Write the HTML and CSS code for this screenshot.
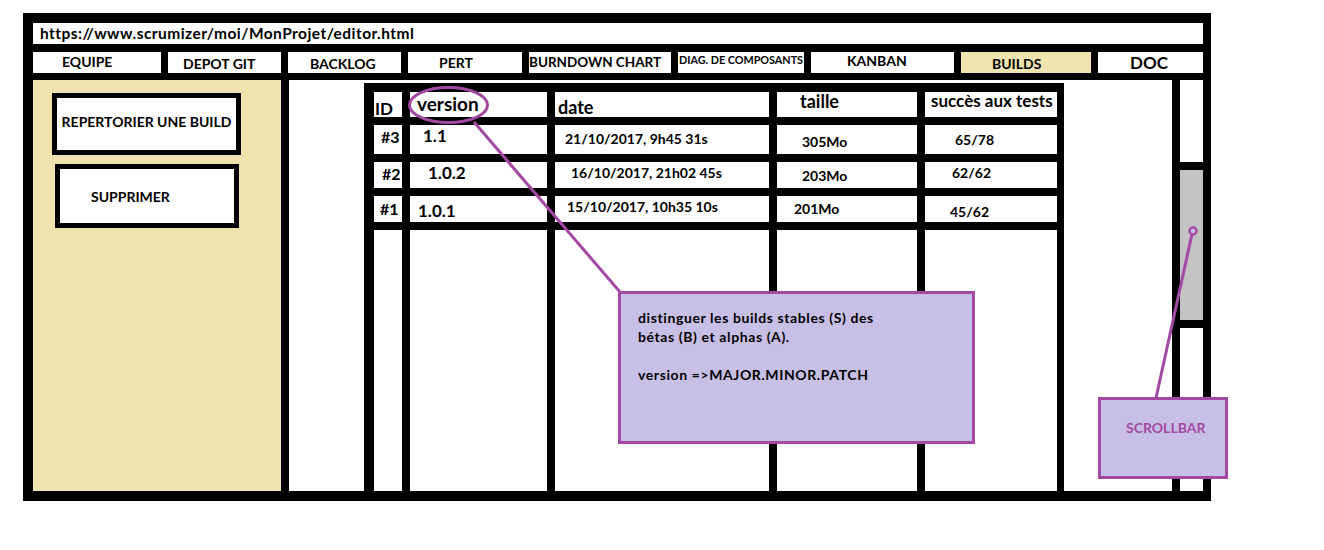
FILE: index.html
```html
<!DOCTYPE html>
<html lang="fr">
<head>
<meta charset="utf-8">
<title>Scrumizer - Builds</title>
<link rel="stylesheet" href="styles.css">
</head>
<body>
<div class="frame">
  <div class="url">https://www.scrumizer/moi/MonProjet/editor.html</div>
  <nav class="tabs">
    <div class="tab t-equipe">EQUIPE</div>
    <div class="tab t-depot">DEPOT GIT</div>
    <div class="tab t-backlog">BACKLOG</div>
    <div class="tab t-pert">PERT</div>
    <div class="tab t-burn">BURNDOWN CHART</div>
    <div class="tab t-diag">DIAG. DE COMPOSANTS</div>
    <div class="tab t-kanban">KANBAN</div>
    <div class="tab t-builds">BUILDS</div>
    <div class="tab t-doc">DOC</div>
  </nav>
  <div class="main">
    <aside class="sidebar">
      <div class="btn btn-rep">REPERTORIER UNE BUILD</div>
      <div class="btn btn-sup">SUPPRIMER</div>
    </aside>
    <section class="content">
      <div class="grid">
        <div class="row hdr">
          <div class="cell id">ID</div>
          <div class="cell ver">version</div>
          <div class="cell date">date</div>
          <div class="cell size">taille</div>
          <div class="cell tests">succès aux tests</div>
        </div>
        <div class="row r1">
          <div class="cell id">#3</div>
          <div class="cell ver">1.1</div>
          <div class="cell date">21/10/2017, 9h45 31s</div>
          <div class="cell size">305Mo</div>
          <div class="cell tests">65/78</div>
        </div>
        <div class="row r2">
          <div class="cell id">#2</div>
          <div class="cell ver">1.0.2</div>
          <div class="cell date">16/10/2017, 21h02 45s</div>
          <div class="cell size">203Mo</div>
          <div class="cell tests">62/62</div>
        </div>
        <div class="row r3">
          <div class="cell id">#1</div>
          <div class="cell ver">1.0.1</div>
          <div class="cell date">15/10/2017, 10h35 10s</div>
          <div class="cell size">201Mo</div>
          <div class="cell tests">45/62</div>
        </div>
        <div class="row empty">
          <div class="cell"></div>
          <div class="cell"></div>
          <div class="cell"></div>
          <div class="cell"></div>
          <div class="cell"></div>
        </div>
      </div>
    </section>
    <div class="scroll"><div class="thumb"></div></div>
  </div>
</div>

<svg class="marks" width="1324" height="550" viewBox="0 0 1324 550" aria-hidden="true">
  <ellipse cx="448.5" cy="105" rx="39" ry="17.5" fill="none" stroke="#A349A4" stroke-width="3"/>
  <line x1="474" y1="122" x2="620" y2="292" stroke="#A349A4" stroke-width="3"/>
  <line x1="1156" y1="398" x2="1192" y2="234" stroke="#A349A4" stroke-width="3"/>
  <circle cx="1193" cy="231" r="3.5" fill="#C8BFE7" stroke="#A349A4" stroke-width="2.5"/>
</svg>

<div class="note note-version">
  <p>distinguer les builds stables (S) des<br>bétas (B) et alphas (A).</p>
  <p>version =&gt;MAJOR.MINOR.PATCH</p>
</div>
<div class="note note-scroll">SCROLLBAR</div>
</body>
</html>
```

FILE: styles.css
```css
html, body {
  margin: 0;
  padding: 0;
}

body {
  width: 1324px;
  height: 550px;
  overflow: hidden;
  background: #fff;
  position: relative;
  padding: 13px 0 0 23px;
  box-sizing: border-box;
  font-family: Lato, "Liberation Sans", sans-serif;
  font-weight: 700;
  color: #000;
}

.frame {
  width: 1188px;
  height: 488px;
  box-sizing: border-box;
  background: #000;
  padding: 10px 8px 10px 10px;
  display: flex;
  flex-direction: column;
}

.url {
  height: 21px;
  background: #fff;
  margin-bottom: 8px;
  font-size: 15.5px;
  letter-spacing: 0.45px;
  line-height: 1;
  padding: 3px 0 0 7px;
  box-sizing: border-box;
  white-space: nowrap;
}

/* ---------- tabs ---------- */
.tabs {
  display: flex;
  gap: 7px;
  height: 21px;
  margin-bottom: 7px;
}

.tab {
  background: #fff;
  height: 21px;
  box-sizing: border-box;
  font-size: 14px;
  line-height: 1;
  white-space: nowrap;
  overflow: hidden;
  flex: none;
}

.t-equipe  { width: 128px; padding: 3px 0 0 29px; }
.t-depot   { width: 113px; padding: 5px 0 0 15px; }
.t-backlog { width: 113px; padding: 5px 0 0 22px; }
.t-pert    { width: 114px; padding: 4px 0 0 31px; }
.t-burn    { width: 142px; padding: 4px 0 0 0; font-size: 13.5px; }
.t-diag    { width: 126px; padding: 3px 0 0 1px; font-size: 10.8px; }
.t-kanban  { width: 143px; padding: 2px 0 0 36px; }
.t-builds  { width: 130px; padding: 5px 0 0 31px; background: #EFE4B0; }
.t-doc     { flex: 1; padding: 2px 0 0 32px; font-size: 17px; }

/* ---------- main ---------- */
.main {
  flex: 1;
  display: flex;
  gap: 8px;
  min-height: 0;
}

.sidebar {
  width: 248px;
  flex: none;
  background: #EFE4B0;
  display: flex;
  flex-direction: column;
  align-items: flex-start;
}

.btn {
  background: #fff;
  border: 5px solid #000;
  box-sizing: border-box;
  display: flex;
  align-items: center;
  font-size: 14px;
  line-height: 1;
  white-space: nowrap;
}

.btn-rep {
  margin: 13px 0 0 19px;
  width: 189px;
  height: 62px;
  justify-content: center;
  padding-bottom: 4px;
}

.btn-sup {
  margin: 9px 0 0 22px;
  width: 184px;
  height: 64px;
  padding-left: 31px;
  padding-top: 2px;
}

.content {
  width: 883px;
  flex: none;
  background: #fff;
  padding: 3px 0 0 75px;
  box-sizing: border-box;
}

.grid {
  width: 700px;
  height: 100%;
  box-sizing: border-box;
  background: #000;
  padding: 9px 7px 0 10px;
  display: grid;
  grid-template-columns: 28px 137px 214px 140px 132px;
  grid-template-rows: 25px 29px 26px 26px 1fr;
  gap: 8px;
}

.row { display: contents; }

.cell {
  background: #fff;
  line-height: 1;
  white-space: nowrap;
  font-size: 14px;
  box-sizing: border-box;
}

/* header */
.hdr .id    { font-size: 17px; padding: 8px 0 0 1px; }
.hdr .ver   { font-size: 19px; padding: 2px 0 0 7px; }
.hdr .date  { font-size: 18px; padding: 6px 0 0 3px; }
.hdr .size  { font-size: 18px; padding: 0 0 0 23px; }
.hdr .tests { font-size: 17px; padding: 0 0 0 6px; }

/* data rows */
.r1 .id, .r2 .id, .r3 .id { font-size: 16px; }
.r1 .ver, .r2 .ver, .r3 .ver { font-size: 17px; }

.r1 .id    { padding: 4px 0 0 7px; }
.r1 .ver   { padding: 2px 0 0 13px; }
.r1 .date  { padding: 7px 0 0 10px; }
.r1 .size  { padding: 10px 0 0 25px; }
.r1 .tests { padding: 8px 0 0 30px; }

.r2 .id    { padding: 4px 0 0 8px; }
.r2 .ver   { padding: 2px 0 0 18px; }
.r2 .date  { padding: 4px 0 0 16px; }
.r2 .size  { padding: 7px 0 0 25px; }
.r2 .tests { padding: 4px 0 0 27px; }

.r3 .id    { padding: 5px 0 0 6px; }
.r3 .ver   { padding: 6px 0 0 8px; }
.r3 .date  { padding: 4px 0 0 12px; }
.r3 .size  { padding: 6px 0 0 17px; }
.r3 .tests { padding: 9px 0 0 25px; }

/* scrollbar */
.scroll {
  width: 23px;
  flex: none;
  background: #fff;
}

.thumb {
  margin-top: 82px;
  height: 166px;
  box-sizing: border-box;
  border-top: 8px solid #000;
  border-bottom: 8px solid #000;
  background: #C3C3C3;
}

/* ---------- annotations ---------- */
.marks {
  position: absolute;
  left: 0;
  top: 0;
  pointer-events: none;
}

.note {
  position: absolute;
  box-sizing: border-box;
  background: #C8BFE7;
  border: 3px solid #A349A4;
}

.note-version {
  left: 618px;
  top: 291px;
  width: 357px;
  height: 153px;
  padding: 14px 0 0 17px;
  font-size: 14px;
  letter-spacing: 0.6px;
  line-height: 19px;
}

.note-version p {
  margin: 0 0 19px 0;
}

.note-scroll {
  left: 1098px;
  top: 397px;
  width: 130px;
  height: 82px;
  padding: 21px 0 0 25px;
  font-size: 14px;
  line-height: 1;
  color: #A349A4;
}
```
